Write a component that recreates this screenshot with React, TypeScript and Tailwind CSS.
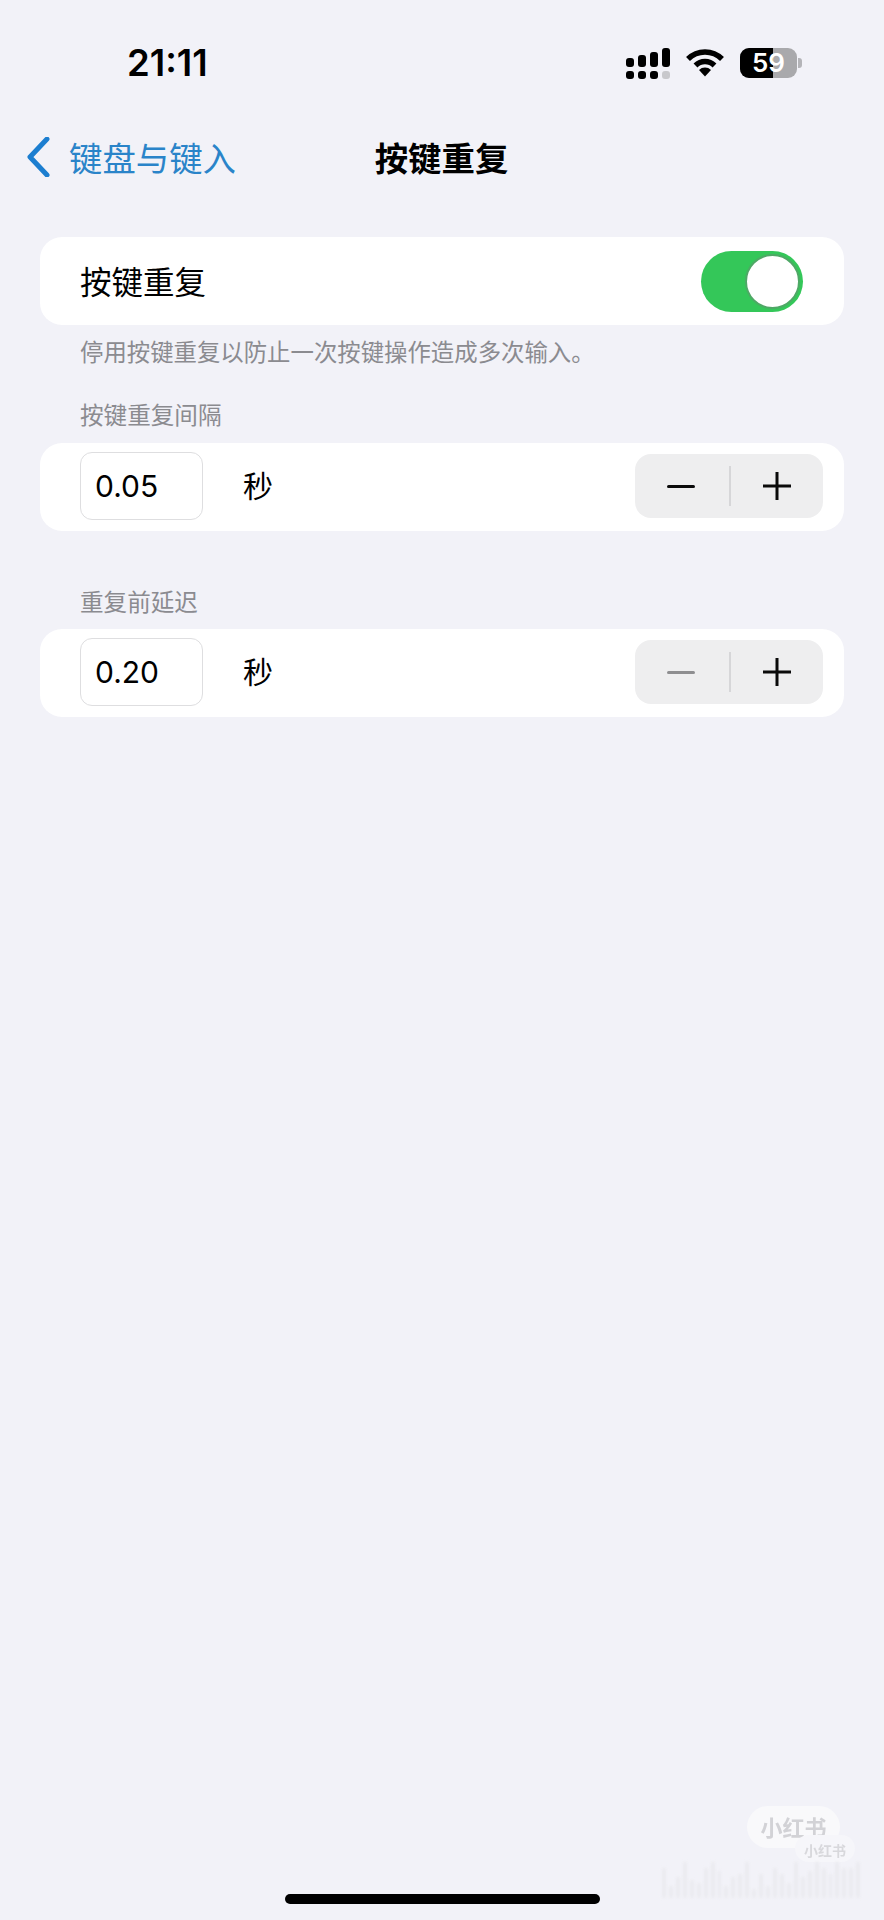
import { FC } from "react";

const cjk = "font-['Noto_Sans_CJK_SC','Noto_Sans',sans-serif]";
const latin = "font-['Inter','Liberation_Sans',sans-serif]";

const watermarkBars = [
  10, 4, 7, 12, 6, 5, 10, 12, 9, 4, 7, 8, 12, 3, 8, 4, 10, 8, 5, 12, 7, 9, 12, 10, 8, 12, 10, 10, 12,
];

const SignalIcon: FC = () => (
  <div className="flex items-end gap-1">
    {[9, 12, 15, 19].map((h, i) => (
      <div key={h} className="flex w-2 flex-col gap-1">
        <div className="w-2 rounded-[3px] bg-black" style={{ height: h }} />
        <div className={`h-2 w-2 rounded-[3px] ${i === 3 ? "bg-[#c8c8cc]" : "bg-black"}`} />
      </div>
    ))}
  </div>
);

const WifiIcon: FC = () => (
  <svg width="38" height="28" viewBox="0 0 38 28" fill="none">
    <path d="M2 10 A24 24 0 0 1 36 10" stroke="#000" strokeWidth="5.5" />
    <path d="M9.5 16.5 A13.5 13.5 0 0 1 28.5 16.5" stroke="#000" strokeWidth="5.5" />
    <path d="M19 27.5 L13 21 A8.5 8.5 0 0 1 25 21 Z" fill="#000" />
  </svg>
);

const BatteryIcon: FC = () => (
  <div className="flex items-center gap-[1px]">
    <div className="relative flex h-[30px] w-[57px] items-center justify-center overflow-hidden rounded-[9px] bg-[#a9a9ac]">
      <div className="absolute inset-y-0 left-0 w-[33px] bg-black" />
      <span className={`${latin} relative text-[26px] leading-none font-semibold text-white`}>59</span>
    </div>
    <div className="h-[10px] w-[4px] rounded-r-[3px] bg-[#b4b4b8]" />
  </div>
);

const Stepper: FC<{ minusColor: string }> = ({ minusColor }) => (
  <div className="mb-[2px] flex h-16 w-[188px] items-center rounded-2xl bg-[#eeeeef]">
    <div className="flex flex-1 justify-center pr-[2px]">
      <div className={`h-[3px] w-7 rounded-full ${minusColor}`} />
    </div>
    <div className="h-10 w-[2px] bg-[#d6d6d8]" />
    <div className="flex flex-1 justify-center">
      <svg width="28" height="28" viewBox="0 0 28 28" fill="none">
        <path d="M0 14 H28 M14 0 V28" stroke="#0a0a0a" strokeWidth="3" />
      </svg>
    </div>
  </div>
);

const ValueRow: FC<{ value: string; minusColor: string }> = ({ value, minusColor }) => (
  <div className="flex h-[88px] items-center rounded-[22px] bg-white pr-[21px] pl-10">
    <div className="mb-[2px] flex h-[68px] w-[123px] items-center rounded-xl border border-[#dedee0] pl-[14px]">
      <span className={`${latin} text-[30px] leading-none text-black`}>{value}</span>
    </div>
    <span className={`${cjk} ml-10 pb-[6px] text-[30px] leading-none text-black`}>秒</span>
    <div className="ml-auto">
      <Stepper minusColor={minusColor} />
    </div>
  </div>
);

const App: FC = () => {
  return (
    <div className={`${cjk} relative flex min-h-[1920px] w-full flex-col overflow-hidden bg-[#f2f2f8]`}>
      <header className="flex h-[126px] items-center justify-between pr-[82px] pl-[127px]">
        <span className={`${latin} text-[36.5px] leading-none font-semibold text-black`}>21:11</span>
        <div className="flex items-center gap-4">
          <SignalIcon />
          <WifiIcon />
          <BatteryIcon />
        </div>
      </header>

      <nav className="relative flex h-[62px] items-center justify-center">
        <div className="absolute top-0 left-[26px] flex h-full items-center gap-[19px]">
          <svg width="24" height="40" viewBox="0 0 24 40" fill="none">
            <path d="M21 2 L4 20 L21 38" stroke="#1c7ed0" strokeWidth="5" strokeLinecap="round" strokeLinejoin="round" />
          </svg>
          <span className="text-[33.4px] leading-none text-[#2a84c9]">键盘与键入</span>
        </div>
        <h1 className="pr-[1px] text-[33.4px] leading-none font-semibold text-black">按键重复</h1>
      </nav>

      <main className="flex flex-col px-10 pt-[49px]">
        <div className="flex h-[88px] items-center justify-between rounded-[22px] bg-white pr-[41px] pl-10">
          <span className="text-[31.5px] leading-none text-black">按键重复</span>
          <div className="flex h-[61px] w-[102px] items-center justify-end rounded-full bg-[#34c759] pr-[3px]">
            <div className="h-[55px] w-[55px] rounded-full border-2 border-[#4fa866] bg-white" />
          </div>
        </div>
        <p className="mt-3 pl-10 text-[23.4px] leading-[28px] text-[#8b8b90]">
          停用按键重复以防止一次按键操作造成多次输入。
        </p>

        <h2 className="mt-[35px] pl-10 text-[23.6px] leading-[28px] font-normal text-[#8b8b90]">按键重复间隔</h2>
        <div className="mt-[15px]">
          <ValueRow value="0.05" minusColor="bg-[#0a0a0a]" />
        </div>

        <h2 className="mt-14 pl-10 text-[23.6px] leading-[28px] font-normal text-[#8b8b90]">重复前延迟</h2>
        <div className="mt-[14px]">
          <ValueRow value="0.20" minusColor="bg-[#8e8e90]" />
        </div>
      </main>

      <div className="absolute top-[1806px] left-[747px] flex h-[42px] w-[93px] items-center justify-center rounded-full bg-[#f9f9fb] blur-[0.5px]">
        <span className="pb-[3px] text-[22px] leading-none font-bold text-[#d2d2d6]">小红书</span>
      </div>
      <div className="absolute top-[1835px] left-[795px] flex h-[27px] w-[60px] items-center justify-center rounded-full bg-[#f6f6fa] blur-[0.5px]">
        <span className="pt-[3px] text-[14px] leading-none font-bold text-[#d8d8dc]">小红书</span>
      </div>
      <div className="absolute top-[1864px] left-[662px] flex h-[34px] w-[198px] items-end gap-[3px] opacity-60 blur-[1.5px]">
        {watermarkBars.map((n, i) => (
          <div key={i} className="w-[4px] bg-[#e6e6ea]" style={{ height: n * 3 }} />
        ))}
      </div>

      <div className="absolute top-[1894px] left-[285px] h-[10px] w-[315px] rounded-full bg-black" />
    </div>
  );
};

export default App;
